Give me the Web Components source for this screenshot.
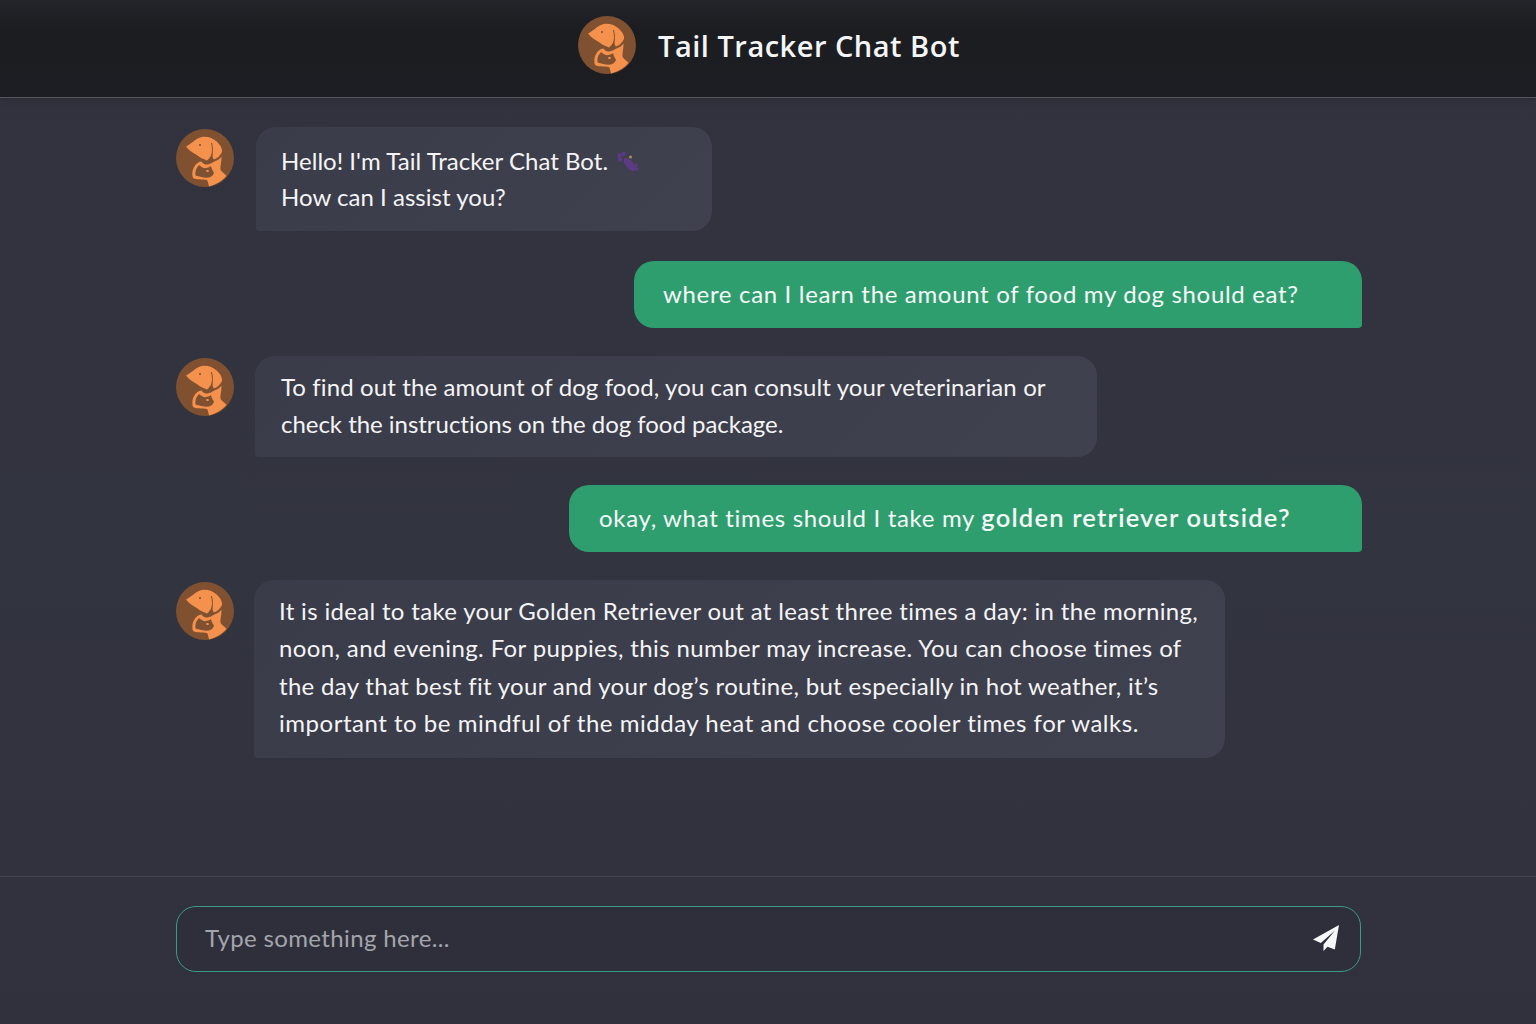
<!DOCTYPE html>
<html lang="en"><head><meta charset="utf-8"><title>Tail Tracker Chat Bot</title>
<style>
html,body{margin:0;height:100%}
body{background:#31323d;font-family:Lato,"Noto Sans",sans-serif;color:#f2f2f4}
</style></head><body>
<chat-app>
<chat-header slot="header">Tail Tracker Chat Bot</chat-header>
<bot-message style="--w:456px;--pl:25px;--lh:36px;--pt:16px;--pb:16px;--ml:22px;--at:2px;--ls:.03px">Hello! I'm Tail Tracker Chat Bot. <paw-emoji></paw-emoji><br>How can I assist you?</bot-message>
<user-message style="--w:728px;--mt:30px;--ls:.67px;--ty:-2px;--pl:29px">where can I learn the amount of food my dog should eat?</user-message>
<bot-message style="--w:842px;--pl:26px;--lh:37px;--pt:11.500px;--pb:15.500px;--ml:21px;--at:2px;--mt:28px;--pr:40px;--ls:.11px">To find out the amount of dog food, you can consult your veterinarian or <span style="letter-spacing:-.03px">check the instructions on the dog food package.</span></bot-message>
<user-message style="--w:793px;--mt:28px;--ls:.68px;--ty:-4px;--pl:30px">okay, what times should I take my <b style="font-size:25.5px;font-weight:600;letter-spacing:1.2px">golden retriever outside?</b></user-message>
<bot-message style="--w:971px;--pl:25px;--lh:37.3px;--pt:12px;--pb:17px;--ml:20px;--at:2px;--mt:28px;--pr:20px"><span style="letter-spacing:.33px">It is ideal to take your Golden Retriever out at least three times a day: in the morning,</span> <span style="letter-spacing:.38px">noon, and evening. For puppies, this number may increase. You can choose times of</span> <span style="letter-spacing:.31px">the day that best fit your and your dog’s routine, but especially in hot weather, it’s</span> <span style="letter-spacing:.52px">important to be mindful of the midday heat and choose cooler times for walks.</span></bot-message>
<chat-input slot="footer">Type something here...</chat-input>
</chat-app>
<script>
const dog=`<svg viewBox="0 0 58 58" width="58" height="58" aria-hidden="true"><circle cx="29" cy="29" r="29" fill="#7f5130"/><path fill="#f4914d" d="M10 17.500C15 15 19 10 25 8.200C30 7 36 8.500 40 12C44 15.500 46.500 19 46 23C44 27 41 29.500 38 30.500C36.500 29.500 36 26 36.300 22C36 26 34 29 31 31.500C27 30 24 28.500 21.500 26.500C17 24 13 21.500 10 17.500Z"/><path fill="#f4914d" d="M39.500 32C42 31 44 29.500 45.500 27.500C45.800 32 44 37 44.500 41C46.500 43.500 49 45 50.500 47C46 52 40 55.500 33 57.500C32.500 55 32 52.500 31 51C26 50.500 20 50.500 17 49C16 46 16 42 17.500 39C19 36 21 34 23 33L25.500 32.500C26.500 34 28 35 29.500 35.500C32 35.500 34.500 35 36.500 33.500Z"/><path fill="#7f5130" d="M19.500 46.500C19 43 19.500 39.500 23 36C25.500 38.500 28 39.500 30.500 39C32.500 38.500 34 38 35 37C35.500 39.500 36.500 41.500 38 43.500C37.500 46 35.500 48 33 48.500C29 49 24 48 19.500 46.500Z"/><ellipse cx="31.500" cy="42" rx="1.500" ry="1.100" fill="#f4914d"/><circle cx="24" cy="16" r="1" fill="#7f5130"/><path fill="none" stroke="#7f5130" stroke-width="1" d="M35.500 14C37 19 36.500 24 35.500 29"/></svg>`;
const def=(n,html)=>customElements.define(n,class extends HTMLElement{constructor(){super();this.attachShadow({mode:"open"}).innerHTML=html}});
def("chat-app",`<style>:host{display:flex;flex-direction:column;height:1024px;box-sizing:border-box;background:linear-gradient(#31323d,#32343f 55%,#30313c)}
main{flex:1;display:flex;flex-direction:column;padding:29px 174px 0 176px;min-height:0}</style>
<slot name="header"></slot><main><slot></slot></main><slot name="footer"></slot>`);
def("chat-header",`<style>:host{display:flex;align-items:center;justify-content:center;gap:22px;height:97px;padding-left:2px;background:linear-gradient(#24252a,#1c1d21 30%,#1d1e23);border-bottom:1px solid #55565e;font:600 29px/1 "Open Sans","Noto Sans",sans-serif;color:#f4f5f6;letter-spacing:.5px;box-shadow:0 2px 6px rgba(0,0,0,.12)}
.l{display:flex;margin-top:-7px}.t{margin-top:-7px}</style><span class="l">${dog}</span><span class="t"><slot></slot></span>`);
def("bot-message",`<style>:host{display:flex;align-items:flex-start;margin-top:var(--mt,0);gap:var(--ml,22px)}
.a{display:flex;margin-top:var(--at,0);flex:none}
.b{box-sizing:border-box;width:var(--w);padding:var(--pt) var(--pr,40px) var(--pb) var(--pl);background:linear-gradient(135deg,#3b3c49,#40414e);border-radius:20px 20px 20px 4px;font-size:24px;line-height:var(--lh);color:#f4f4f6;letter-spacing:var(--ls,0)}</style>
<span class="a">${dog}</span><div class="b"><slot></slot></div>`);
def("user-message",`<style>:host{display:flex;justify-content:flex-end;margin-top:var(--mt,0)}
.b{box-sizing:border-box;width:var(--w);height:67px;display:flex;align-items:center;padding:0 20px 0 var(--pl,29px);background:#2f9e6f;border-radius:20px 20px 4px 20px;font-size:24px;color:#f6fbf8;white-space:pre;letter-spacing:var(--ls,0)}
span{margin-top:var(--ty,-2px)}</style><div class="b"><span><slot></slot></span></div>`);
def("paw-emoji",`<style>:host{display:inline-block;width:24px;height:24px;vertical-align:-5px;margin-left:2px}</style><svg viewBox="0 0 24 24" width="24" height="24" aria-hidden="true"><g fill="#5c3a86"><ellipse cx="13.500" cy="13.500" rx="3.800" ry="8" transform="rotate(-38 13.500 13.500)"/><circle cx="3.500" cy="4.500" r="2.200"/><circle cx="7.500" cy="3" r="2.200"/><circle cx="4" cy="8.500" r="2.200"/><circle cx="20" cy="14.500" r="1.800"/><circle cx="20.500" cy="18" r="1.800"/></g><circle cx="14.500" cy="6" r="1.500" fill="#a8934a"/></svg>`);
def("chat-input",`<style>:host{display:block;height:148px;box-sizing:border-box;border-top:1px solid #45464f;padding:29px 175.500px 0 176px}
.f{box-sizing:border-box;height:66px;display:flex;align-items:center;justify-content:space-between;padding:0 20px 0 28px;border:1.500px solid #3b9c84;border-radius:20px;background:#2e2f3a;font-size:24px;color:#a4a5ac;letter-spacing:.36px}
span{margin-top:-3px}svg{display:block;margin-top:-2px}</style><div class="f" role="textbox"><span><slot></slot></span><svg viewBox="0 0 28 28" width="28" height="28" aria-hidden="true"><path fill="#f5f7f9" d="M27 1L1 15.500L8.800 19L23 6.500L11.500 20.500V27L15.500 22.800L22.800 25.500Z"/></svg></div>`);
</script></body></html>
